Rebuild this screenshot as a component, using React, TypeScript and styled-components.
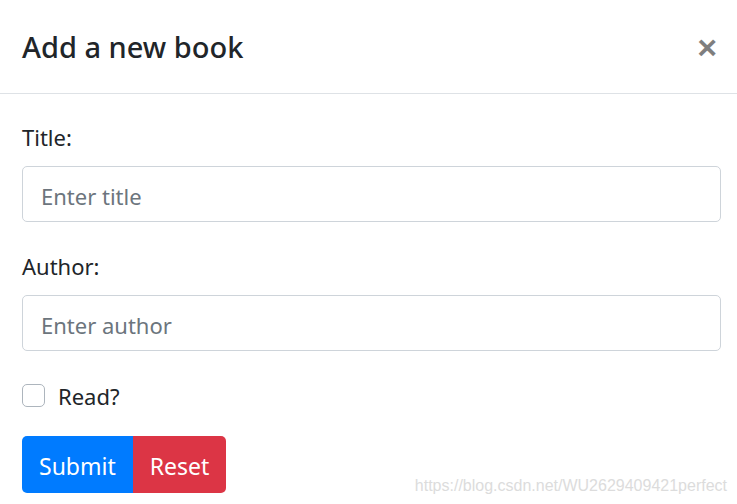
import React from 'react';
import styled, { createGlobalStyle } from 'styled-components';

const GlobalStyle = createGlobalStyle`
  html, body {
    margin: 0;
    padding: 0;
    background: #fff;
  }
  body {
    font-family: 'Noto Sans', 'Open Sans', sans-serif;
    color: #212529;
  }
`;

const Modal = styled.div`
  position: relative;
  width: 737px;
  height: 504px;
  overflow: hidden;
  background: #fff;
`;

const Header = styled.div`
  display: flex;
  align-items: center;
  justify-content: space-between;
  height: 94px;
  padding: 0 20px 0 22px;
  border-bottom: 1px solid #dee2e6;
  box-sizing: border-box;
`;

const Title = styled.h5`
  margin: 0;
  font-size: 29px;
  font-weight: 500;
  line-height: 1.5;
  color: #212529;
`;

const Close = styled.button`
  border: 0;
  background: transparent;
  padding: 0;
  font-family: 'Liberation Sans', Arial, sans-serif;
  font-size: 34px;
  font-weight: 700;
  line-height: 1;
  color: #000;
  opacity: 0.5;
  text-shadow: 0 1px 0 #fff;
  cursor: pointer;
`;

const Body = styled.form`
  padding: 26px 16px 0 22px;
`;

const Group = styled.div`
  margin-bottom: 27px;
`;

const Label = styled.label`
  display: block;
  font-size: 22px;
  line-height: 35px;
  margin-bottom: 11px;
`;

const Input = styled.input`
  display: block;
  width: 100%;
  height: 56px;
  box-sizing: border-box;
  padding: 3px 18px 0;
  font-family: inherit;
  font-size: 22px;
  color: #495057;
  border: 1px solid #ced4da;
  border-radius: 5px;
  outline: none;
  &::placeholder {
    color: #6c757d;
  }
`;

const Check = styled.label`
  display: flex;
  align-items: center;
  gap: 13px;
  height: 35px;
  margin-bottom: 23px;
  font-size: 22px;
`;

const Box = styled.span`
  display: inline-block;
  width: 21px;
  height: 21px;
  border: 1px solid #adb5bd;
  border-radius: 5px;
  background: #fff;
`;

const Buttons = styled.div`
  display: flex;
`;

const Button = styled.button<{ $variant: 'primary' | 'danger' }>`
  height: 57px;
  padding: 3px 17px 0;
  border: 0;
  font-family: inherit;
  font-size: 23px;
  color: #fff;
  background: ${(p) => (p.$variant === 'primary' ? '#007bff' : '#dc3545')};
  border-radius: ${(p) => (p.$variant === 'primary' ? '5px 0 0 5px' : '0 5px 5px 0')};
  cursor: pointer;
`;

const Watermark = styled.span`
  position: absolute;
  right: 10px;
  bottom: 9px;
  font-family: 'Liberation Sans', Arial, sans-serif;
  font-size: 16px;
  color: #dcdcdc;
`;

function App() {
  return (
    <>
      <GlobalStyle />
      <Modal>
        <Header>
          <Title>Add a new book</Title>
          <Close type="button">×</Close>
        </Header>
        <Body>
          <Group>
            <Label>Title:</Label>
            <Input placeholder="Enter title" />
          </Group>
          <Group>
            <Label>Author:</Label>
            <Input placeholder="Enter author" />
          </Group>
          <Check>
            <Box />
            Read?
          </Check>
          <Buttons>
            <Button type="button" $variant="primary">
              Submit
            </Button>
            <Button type="button" $variant="danger">
              Reset
            </Button>
          </Buttons>
        </Body>
        <Watermark>https://blog.csdn.net/WU2629409421perfect</Watermark>
      </Modal>
    </>
  );
}

export default App;
